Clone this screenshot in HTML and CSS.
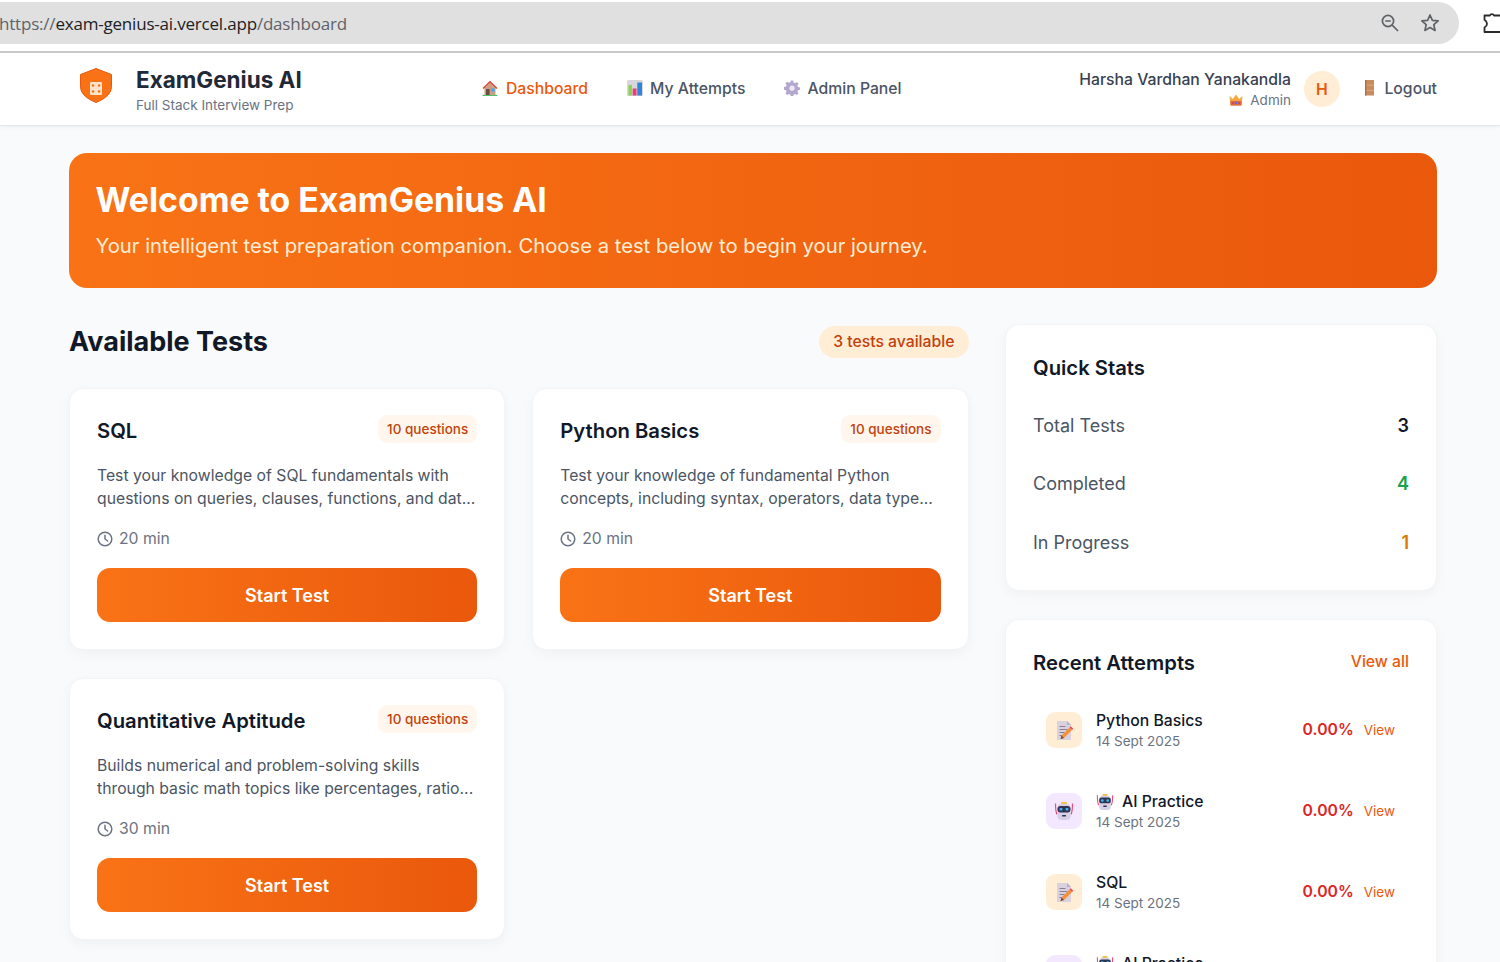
FILE: index.html
```html
<!DOCTYPE html>
<html>
	<head>
		<meta charset="UTF-8">
		<title>ExamGenius AI</title>
		<link rel="stylesheet" href="styles.css">
	</head>
	<body>
		<svg class="sprites" width="0" height="0">
			<symbol id="i-house" viewBox="0 0 16 16">
				<rect x="0.5" y="14.8" width="15" height="1.200" fill="#4fc26b"/>
				<path d="M2.500 7h11v8h-11z" fill="#c9a083"/>
				<path d="M0.500 8 8 .8 15.500 8l-1.200 1L8 3.200 1.700 9z" fill="#d9483b"/>
				<path d="M8 3.200 13.500 8.200h-11z" fill="#c9a083"/>
				<rect x="4" y="9" width="3.600" height="6" fill="#6d4c41"/>
				<rect x="9.200" y="8.400" width="3.400" height="3.200" fill="#3fa9f5"/>
			</symbol>
			<symbol id="i-chart" viewBox="0 0 16 16">
				<rect x="0" y="0" width="16" height="16" rx="1.500" fill="#d8d5dc"/>
				<rect x="1.500" y="5" width="3.400" height="10.500" fill="#8bd34a"/>
				<rect x="5.700" y="8.500" width="3.800" height="7" fill="#f0397b"/>
				<rect x="10.300" y="2.500" width="4.700" height="13" fill="#2f86d6"/>
			</symbol>
			<symbol id="i-gear" viewBox="0 0 16 16">
				<path d="M6.800 .6h2.400l.4 2 1.500.6 1.700-1.100 1.700 1.700-1.100 1.700.6 1.500 2 .4v2.400l-2 .4-.6 1.500 1.100 1.700-1.700 1.700-1.700-1.100-1.500.6-.4 2H6.800l-.4-2-1.500-.6-1.700 1.100-1.700-1.700 1.100-1.700-.6-1.500-2-.4V7l2-.4.6-1.500-1.100-1.700 1.700-1.700 1.700 1.100 1.500-.6z" fill="#b3a6cf"/>
				<circle cx="8" cy="8.200" r="2.600" fill="#ece8f4"/>
			</symbol>
			<symbol id="i-door" viewBox="0 0 16 16">
				<rect x="5" y="0" width="9" height="15.500" fill="#c98a5e"/>
				<path d="M5 5.200h9M5 10.400h9" stroke="#e0a67c" stroke-width="1"/>
				<rect x="5" y="0" width="1.300" height="15.500" fill="#a96c44"/>
			</symbol>
			<symbol id="i-crown" viewBox="0 0 14 12">
				<path d="M.5 2 3.800 5 7 .5 10.200 5l3.300-3-1 9.500h-11z" fill="#f4a940"/>
				<rect x="1.500" y="7" width="11" height="4.500" fill="#e2683c"/>
				<circle cx="7" cy="9" r="1.400" fill="#5a6fe0"/>
				<circle cx="3.800" cy="9.200" r=".9" fill="#d83a5a"/>
				<circle cx="10.200" cy="9.200" r=".9" fill="#d83a5a"/>
			</symbol>
			<symbol id="i-memo" viewBox="0 0 20 20">
				<path d="M3 1h10l4 4v15H3z" fill="#d9d2de"/>
				<path d="M13 1l4 4h-4z" fill="#b8aec2"/>
				<path d="M5.500 6.500h6M5.500 9.500h8M5.500 12.500h5M5.500 15.500h3" stroke="#8a7f95" stroke-width="1"/>
				<path d="M6.500 19l1-3.500 8-8 2.500 2.500-8 8z" fill="#f2913a"/>
				<path d="M15.500 7.500l1.300-1.300 2.500 2.500L18 10z" fill="#ee4f4f"/>
				<path d="M6.500 19l1-3.500 2.500 2.500z" fill="#6d4c41"/>
			</symbol>
			<symbol id="i-robot" viewBox="0 0 20 20">
				<path d="M1.500 2.500c0 4 0 8 1.500 11M18.500 2.500c0 4 0 8-1.500 11" fill="none" stroke="#ef4a7a" stroke-width="1.200"/>
				<rect x="7" y="1" width="6" height="2.500" rx="1" fill="#f5c04a"/>
				<rect x="3.500" y="3" width="13" height="16" rx="4" fill="#d8d0e6"/>
				<rect x="3.500" y="5" width="13" height="6.500" rx="3" fill="#2f3550"/>
				<rect x="5.500" y="7" width="3" height="2.600" rx="1" fill="#3fb4f0"/>
				<rect x="11.500" y="7" width="3" height="2.600" rx="1" fill="#3fb4f0"/>
				<rect x="8" y="14" width="4" height="1.600" rx=".5" fill="#2f3550"/>
			</symbol>
			<symbol id="i-clock" viewBox="0 0 16 16">
				<circle cx="8" cy="8" r="6.800" fill="none" stroke="currentColor" stroke-width="1.500"/>
				<path d="M8 4.200V8l2.600 2" fill="none" stroke="currentColor" stroke-width="1.500" stroke-linecap="round"/>
			</symbol>
		</svg>

		<!--browser bar-->
		<div class="chrome">
			<div class="address">
				<div class="url">https://<span class="host">exam-genius-ai.vercel.app</span>/dashboard</div>
				<svg class="chrome-icon" width="20" height="20" viewBox="0 0 20 20" fill="none" stroke="#5f6368" stroke-width="1.700">
					<circle cx="8" cy="8" r="5.600"/>
					<path d="M12.200 12.200 18 18M5.200 8h5.600"/>
				</svg>
				<svg class="chrome-icon" width="20" height="20" viewBox="0 0 20 20" fill="none" stroke="#5f6368" stroke-width="1.700" stroke-linejoin="round">
					<path d="M10 2l2.400 5.300 5.800.6-4.400 3.800 1.300 5.700L10 14.500l-5.100 2.900 1.300-5.700-4.400-3.800 5.800-.6z"/>
				</svg>
			</div>
			<svg class="puzzle" width="20" height="22" viewBox="0 0 20 22" fill="none" stroke="#2b2b2b" stroke-width="1.800" stroke-linejoin="round">
				<path d="M1.500 3.500H6.800a2.300 2.300 0 0 1 4.200 0H22V20H1.500v-4.500C3.500 14.500 4 13 4 11.800 4 10.200 3 8.800 1.500 7.800z"/>
			</svg>
		</div>

		<div class="topnav">
			<div class="brand">
				<svg class="logo" width="32" height="35" viewBox="0 0 32 35">
					<path d="M16 .5 31.500 6.500v12c0 7.500-7 12.500-15.500 16C7.500 31 .5 26 .5 18.500v-12z" fill="#f97316" stroke="#ea580c" stroke-linejoin="round"/>
					<rect x="10" y="14" width="12" height="13" rx="1" fill="#ffe4cc"/>
					<circle cx="13" cy="17.500" r="1.300" fill="#f97316"/>
					<circle cx="19" cy="17.500" r="1.300" fill="#f97316"/>
					<circle cx="13" cy="23.500" r="1.300" fill="#f97316"/>
					<circle cx="19" cy="23.500" r="1.300" fill="#f97316"/>
				</svg>
				<div class="brand-text">
					<div class="brand-name">ExamGenius AI</div>
					<div class="brand-sub">Full Stack Interview Prep</div>
				</div>
			</div>
			<div class="menu">
				<a class="menu-item active" href="#"><svg width="16" height="16"><use href="#i-house"/></svg>Dashboard</a>
				<a class="menu-item" href="#"><svg width="16" height="16"><use href="#i-chart"/></svg>My Attempts</a>
				<a class="menu-item" href="#"><svg width="16" height="16"><use href="#i-gear"/></svg>Admin Panel</a>
			</div>
			<div class="user">
				<div class="user-info">
					<div class="user-name">Harsha Vardhan Yanakandla</div>
					<div class="user-role"><svg width="14" height="12"><use href="#i-crown"/></svg>Admin</div>
				</div>
				<div class="avatar">H</div>
				<a class="logout" href="#"><svg width="16" height="16"><use href="#i-door"/></svg>Logout</a>
			</div>
		</div>

		<div class="page">
			<div class="hero">
				<h1>Welcome to ExamGenius AI</h1>
				<p>Your intelligent test preparation companion. Choose a test below to begin your journey.</p>
			</div>

			<div class="columns">
				<div class="tests">
					<div class="tests-head">
						<h2>Available Tests</h2>
						<span class="count">3 tests available</span>
					</div>
					<div class="test-grid">
						<div class="test-card">
							<div class="test-top">
								<h3>SQL</h3>
								<span class="badge">10 questions</span>
							</div>
							<p class="test-desc">Test your knowledge of SQL fundamentals with<br>questions on queries, clauses, functions, and dat...</p>
							<div class="test-time"><svg width="16" height="16"><use href="#i-clock"/></svg>20 min</div>
							<a class="start" href="#">Start Test</a>
						</div>
						<div class="test-card">
							<div class="test-top">
								<h3>Python Basics</h3>
								<span class="badge">10 questions</span>
							</div>
							<p class="test-desc">Test your knowledge of fundamental Python<br>concepts, including syntax, operators, data type...</p>
							<div class="test-time"><svg width="16" height="16"><use href="#i-clock"/></svg>20 min</div>
							<a class="start" href="#">Start Test</a>
						</div>
						<div class="test-card">
							<div class="test-top">
								<h3>Quantitative Aptitude</h3>
								<span class="badge">10 questions</span>
							</div>
							<p class="test-desc">Builds numerical and problem-solving skills<br>through basic math topics like percentages, ratio...</p>
							<div class="test-time"><svg width="16" height="16"><use href="#i-clock"/></svg>30 min</div>
							<a class="start" href="#">Start Test</a>
						</div>
					</div>
				</div>

				<div class="side">
					<div class="panel stats">
						<h3>Quick Stats</h3>
						<div class="stat"><span>Total Tests</span><b>3</b></div>
						<div class="stat"><span>Completed</span><b class="green">4</b></div>
						<div class="stat"><span>In Progress</span><b class="amber">1</b></div>
					</div>
					<div class="panel recent">
						<div class="recent-head">
							<h3>Recent Attempts</h3>
							<a href="#">View all</a>
						</div>
						<div class="attempt">
							<div class="attempt-icon peach"><svg width="20" height="20"><use href="#i-memo"/></svg></div>
							<div class="attempt-info">
								<div class="attempt-name">Python Basics</div>
								<div class="attempt-date">14 Sept 2025</div>
							</div>
							<div class="score">0.00%</div>
							<a class="view" href="#">View</a>
						</div>
						<div class="attempt">
							<div class="attempt-icon lilac"><svg width="20" height="20"><use href="#i-robot"/></svg></div>
							<div class="attempt-info">
								<div class="attempt-name"><svg width="18" height="18"><use href="#i-robot"/></svg>AI Practice</div>
								<div class="attempt-date">14 Sept 2025</div>
							</div>
							<div class="score">0.00%</div>
							<a class="view" href="#">View</a>
						</div>
						<div class="attempt">
							<div class="attempt-icon peach"><svg width="20" height="20"><use href="#i-memo"/></svg></div>
							<div class="attempt-info">
								<div class="attempt-name">SQL</div>
								<div class="attempt-date">14 Sept 2025</div>
							</div>
							<div class="score">0.00%</div>
							<a class="view" href="#">View</a>
						</div>
						<div class="attempt">
							<div class="attempt-icon lilac"><svg width="20" height="20"><use href="#i-robot"/></svg></div>
							<div class="attempt-info">
								<div class="attempt-name"><svg width="18" height="18"><use href="#i-robot"/></svg>AI Practice</div>
								<div class="attempt-date">14 Sept 2025</div>
							</div>
							<div class="score">0.00%</div>
							<a class="view" href="#">View</a>
						</div>
					</div>
				</div>
			</div>
		</div>
	</body>
</html>
```

FILE: styles.css
```css
*{
	margin: 0;
	padding: 0;
	box-sizing: border-box;
}
html, body{
	height: 962px;
	overflow: hidden;
}
body{
	background-color: #f9fafb;
	font-family: Inter, "Liberation Sans", sans-serif;
	color: #111827;
}
a{
	text-decoration: none;
}
.sprites{
	position: absolute;
}

/*browser bar*/
.chrome{
	height: 53px;
	padding-top: 2px;
	background-color: #fff;
	border-bottom: 2px solid #c8c8c8;
	display: flex;
	align-items: flex-start;
	overflow: hidden;
}
.address{
	flex: none;
	width: 1459px;
	height: 42px;
	background-color: #e0e0e0;
	border-radius: 0 21px 21px 0;
	display: flex;
	align-items: center;
	gap: 20px;
	padding-right: 19px;
}
.url{
	flex: 1;
	font-family: "Open Sans", sans-serif;
	font-size: 17px;
	letter-spacing: -0.2px;
	color: #5f6368;
	margin-left: -1px;
}
.host{
	color: #202124;
}
.puzzle{
	margin: 10px 0 0 24px;
	flex: none;
}

/*top navigation*/
.topnav{
	height: 73px;
	background-color: #fff;
	border-bottom: 1px solid #e5e7eb;
	box-shadow: 0 1px 3px rgba(0,0,0,0.06);
	display: flex;
	align-items: center;
	justify-content: space-between;
	padding: 0 63px 0 80px;
}
.brand{
	display: flex;
	align-items: center;
	gap: 24px;
}
.logo{
	margin-bottom: 7px;
}
.brand-text{
	margin-top: 1px;
}
.brand-name{
	font-size: 22.500px;
	font-weight: 700;
	color: #1f2937;
	line-height: 30px;
}
.brand-sub{
	font-size: 13.500px;
	color: #6b7280;
	line-height: 20px;
}
.menu{
	display: flex;
	gap: 38.500px;
	margin: 0 0 2px 3px;
}
.menu-item{
	display: flex;
	align-items: center;
	gap: 7.500px;
	font-size: 15.750px;
	font-weight: 500;
	color: #4b5563;
}
.menu-item.active{
	color: #ea580c;
}
.user{
	display: flex;
	align-items: center;
}
.user-info{
	text-align: right;
}
.user-name{
	font-size: 15.750px;
	font-weight: 500;
	color: #374151;
	line-height: 24px;
}
.user-role{
	margin-top: -2px;
	font-size: 13.500px;
	color: #6b7280;
	line-height: 20px;
	display: flex;
	justify-content: flex-end;
	align-items: center;
	gap: 7px;
}
.avatar{
	width: 36px;
	height: 36px;
	margin-left: 13px;
	border-radius: 50%;
	background-color: #ffedd5;
	color: #ea580c;
	font-size: 15.750px;
	font-weight: 600;
	display: flex;
	align-items: center;
	justify-content: center;
}
.logout{
	display: flex;
	align-items: center;
	gap: 8.500px;
	margin: 0 0 2px 20px;
	font-size: 15.750px;
	font-weight: 500;
	color: #4b5563;
}

/*main*/
.page{
	padding: 27px 63px 0 69px;
}
.hero{
	height: 135px;
	padding: 27px 26.500px;
	border-radius: 18px;
	background: linear-gradient(90deg, #f97316, #ea580c);
	color: #fff;
}
.hero h1{
	font-size: 33.750px;
	font-weight: 700;
	line-height: 40px;
}
.hero p{
	margin-top: 12px;
	font-size: 20.250px;
	line-height: 28px;
	color: #ffedd5;
}
.columns{
	display: grid;
	grid-template-columns: 899.500px 432px;
	gap: 36.500px;
	margin-top: 37px;
}
.tests-head{
	display: flex;
	align-items: center;
	justify-content: space-between;
	height: 32px;
	margin-bottom: 31px;
}
.tests-head h2{
	font-size: 27px;
	font-weight: 700;
}
.count{
	margin-top: 2px;
	height: 32px;
	line-height: 32px;
	padding: 0 14px;
	border-radius: 16px;
	background-color: #ffedd5;
	color: #c2410c;
	font-size: 15.750px;
	font-weight: 500;
}
.test-grid{
	display: grid;
	grid-template-columns: 1fr 1fr;
	gap: 28px 27px;
}
.test-card{
	height: 262px;
	padding: 26px 27px;
	background-color: #fff;
	border: 1px solid #f3f4f6;
	border-radius: 14px;
	box-shadow: 0 4px 12px rgba(0,0,0,0.04);
}
.test-top{
	display: flex;
	align-items: flex-start;
	justify-content: space-between;
	height: 28px;
}
.test-top h3{
	font-size: 20.250px;
	font-weight: 600;
	line-height: 31px;
}
.badge{
	height: 28px;
	line-height: 28px;
	padding: 0 9px;
	border-radius: 9px;
	background-color: #fff7ed;
	color: #c2410c;
	font-size: 13.500px;
	font-weight: 500;
}
.test-desc{
	margin-top: 22px;
	font-size: 15.750px;
	line-height: 22.500px;
	color: #4b5563;
}
.test-time{
	margin-top: 18px;
	display: flex;
	align-items: center;
	gap: 6px;
	font-size: 15.750px;
	line-height: 22px;
	color: #6b7280;
}
.start{
	display: block;
	margin-top: 18px;
	height: 54px;
	line-height: 56px;
	border-radius: 13px;
	text-align: center;
	background: linear-gradient(90deg, #f97316, #ea580c);
	color: #fff;
	font-size: 18px;
	font-weight: 600;
}

/*right side*/
.side{
	margin-top: -1px;
	display: flex;
	flex-direction: column;
	gap: 28px;
}
.panel{
	padding: 28px 27px 27px;
	background-color: #fff;
	border: 1px solid #f3f4f6;
	border-radius: 14px;
	box-shadow: 0 4px 12px rgba(0,0,0,0.04);
}
.panel h3{
	font-size: 20.250px;
	font-weight: 600;
	line-height: 30px;
}
.stats{
	height: 267px;
}
.stat{
	display: flex;
	justify-content: space-between;
	align-items: center;
	height: 58.500px;
	font-size: 18px;
	color: #4b5563;
}
.stat:first-of-type{
	margin-top: 13px;
}
.stat b{
	font-weight: 600;
	color: #111827;
}
.stat b.green{
	color: #16a34a;
}
.stat b.amber{
	color: #d97706;
}
.recent-head{
	display: flex;
	justify-content: space-between;
	align-items: flex-start;
}
.recent-head a{
	font-size: 15.750px;
	font-weight: 500;
	color: #ea580c;
	line-height: 28px;
}
.attempt{
	display: flex;
	align-items: center;
	height: 81px;
	padding: 0 14px 0 13px;
}
.recent-head + .attempt{
	margin-top: 11px;
}
.attempt-icon{
	width: 36px;
	height: 36px;
	border-radius: 9px;
	display: flex;
	align-items: center;
	justify-content: center;
}
.peach{
	background-color: #ffedd5;
}
.lilac{
	background-color: #f3e8ff;
}
.attempt-info{
	flex: 1;
	margin-left: 14px;
}
.attempt-name{
	display: flex;
	align-items: center;
	gap: 8px;
	font-size: 15.750px;
	font-weight: 500;
	line-height: 24px;
	color: #111827;
}
.attempt-date{
	margin-top: -2px;
	font-size: 13.500px;
	line-height: 20px;
	color: #6b7280;
}
.score{
	font-size: 15.750px;
	font-weight: 600;
	color: #dc2626;
}
.view{
	margin-left: 10px;
	font-size: 13.500px;
	color: #ea580c;
}
```
